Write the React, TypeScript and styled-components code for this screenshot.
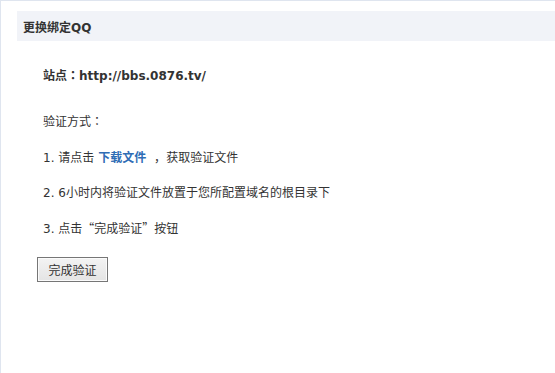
import React from "react";
import styled, { createGlobalStyle } from "styled-components";

const Global = createGlobalStyle`
  html, body { margin: 0; padding: 0; background: #fff; overflow: hidden; }
  body { font-family: Tahoma, "DejaVu Sans", "Noto Sans CJK SC", sans-serif; font-size: 12px; color: #333; }
`;

const Frame = styled.div`
  box-sizing: border-box;
  min-height: 100vh;
  border-top: 1px solid #dfe5ef;
  border-left: 1px solid #dfe5ef;
  padding: 10px 0 0 16px;
`;

const Header = styled.div`
  height: 30px;
  background: #f1f3f8;
  display: flex;
  align-items: center;
  padding-left: 6px;
  font-weight: bold;
  font-size: 12px;
  color: #333;
`;

const Body = styled.div`
  padding: 22.5px 0 0 20px;
  display: flex;
  flex-direction: column;
  align-items: flex-start;
`;

const Line = styled.p<{ $gap?: number; $bold?: boolean }>`
  margin: 0 0 ${(p) => (p.$gap ?? 11.5)}px 0;
  padding-left: 6px;
  height: 24px;
  line-height: 24px;
  font-size: 12px;
  font-weight: ${(p) => (p.$bold ? "bold" : "normal")};
  color: #333;
  white-space: nowrap;
`;

const Punct = styled.span<{ $centered?: boolean }>`
  font-family: ${(p) =>
    p.$centered ? '"Noto Sans CJK TC"' : '"Noto Sans CJK SC"'}, sans-serif;
  line-height: 0;
`;

const Link = styled.a`
  color: #2f6db5;
  font-weight: bold;
  text-decoration: none;
  margin: 0 4px;
`;

const Button = styled.button`
  margin-top: 5px;
  box-sizing: border-box;
  width: 71px;
  height: 25px;
  border: 1px solid #767676;
  background: linear-gradient(#f3f3f3, #e4e4e4);
  box-shadow: inset 0 0 0 1px #fbfbfb;
  font-family: inherit;
  font-size: 12px;
  color: #333;
  padding: 0;
  border-radius: 0;
`;

export default function App() {
  return (
    <>
      <Global />
      <Frame>
        <Header>更换绑定QQ</Header>
        <Body>
          <Line $bold $gap={22.5}>
            站点<Punct $centered>：</Punct>http://bbs.0876.tv/
          </Line>
          <Line>
            验证方式<Punct $centered>：</Punct>
          </Line>
          <Line>
            1. 请点击<Link href="#">下载文件</Link> <Punct>，</Punct>获取验证文件
          </Line>
          <Line>2. 6小时内将验证文件放置于您所配置域名的根目录下</Line>
          <Line>
            3. 点击<Punct>“</Punct>完成验证<Punct>”</Punct>按钮
          </Line>
          <Button>完成验证</Button>
        </Body>
      </Frame>
    </>
  );
}
